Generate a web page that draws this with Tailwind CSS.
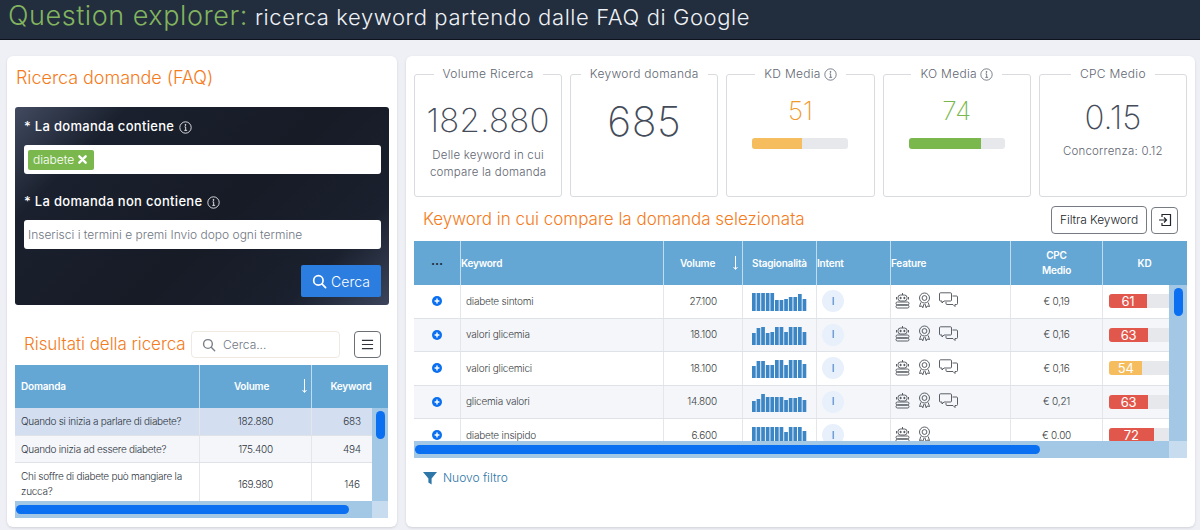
<!DOCTYPE html>
<html lang="it">
<head>
  <meta charset="UTF-8" />
  <meta name="viewport" content="width=device-width, initial-scale=1.0"/>
  <title>Question explorer</title>
  <script src="https://cdn.jsdelivr.net/npm/@tailwindcss/browser@4"></script>
</head>
<body class="h-[530px] w-[1200px] overflow-hidden bg-[#eef0f6] font-['Inter','Noto_Sans',sans-serif] text-[#3b4250]">

  <header class="flex h-[40px] items-baseline gap-[7px] border-b border-[#0e131b] bg-[#222d3d] pl-[8px]">
    <span class="text-[27px] leading-[31px] font-light tracking-[0.55px] text-[#82b45f]">Question explorer:</span>
    <span class="text-[22px] leading-[31px] font-light tracking-[0.6px] text-[#eef1f5]">ricerca keyword partendo dalle FAQ di Google</span>
  </header>

  <main class="flex gap-[9px] pl-[7px] pt-[16px]">

    <!-- colonna sinistra -->
    <section class="h-[471px] w-[390px] rounded-md bg-white px-[8px] shadow-sm">
      <h2 class="pl-[1px] pt-[10px] text-[18px] leading-[24px] font-light tracking-[-0.05px] text-[#f47b20]">Ricerca domande (FAQ)</h2>

      <div class="mt-[17px] h-[198px] w-[374px] rounded-[3px] bg-[linear-gradient(135deg,#414a60_0%,#1a202d_20%,#161b26_55%,#1a202d_82%,#3b445b_100%)] pl-[9px] pr-[8px] pt-[12px]">
        <label class="flex h-[16px] items-center gap-[5px] text-[13px] font-medium tracking-[0.3px] text-white">* La domanda contiene <svg class="h-[13px] w-[13px]" viewBox="0 0 16 16" fill="none" stroke="currentColor"><circle cx="8" cy="8" r="7"/><path d="M6.8 7.2H8.2V11.5M6.5 11.5H10" /><circle cx="8" cy="4.8" r=".6" fill="currentColor"/></svg></label>
        <div class="mt-[10px] flex h-[29px] items-center rounded-[3px] bg-white pl-[4px]">
          <span class="flex h-[20px] w-[66px] items-center gap-[4px] rounded-[2px] bg-[#7ab84e] pl-[5px] text-[12px] font-light text-white">diabete
            <svg class="h-[9px] w-[9px]" viewBox="0 0 10 10" stroke="white" stroke-width="2.6" stroke-linecap="round"><path d="M1.5 1.5 8.5 8.5M8.5 1.5 1.5 8.5"/></svg>
          </span>
        </div>
        <label class="mt-[20px] flex h-[16px] items-center gap-[5px] text-[13px] font-medium tracking-[0.3px] text-white">* La domanda non contiene <svg class="h-[13px] w-[13px]" viewBox="0 0 16 16" fill="none" stroke="currentColor"><circle cx="8" cy="8" r="7"/><path d="M6.8 7.2H8.2V11.5M6.5 11.5H10" /><circle cx="8" cy="4.8" r=".6" fill="currentColor"/></svg></label>
        <div class="mt-[10px] flex h-[29px] items-center rounded-[3px] bg-white pl-[4px] text-[12px] font-light text-[#6f7682]">Inserisci i termini e premi Invio dopo ogni termine</div>
        <div class="mt-[16px] flex justify-end">
          <button class="flex h-[32px] w-[80px] items-center justify-center gap-[4px] rounded-[2px] bg-[#2b7de0] text-[14px] font-light text-white">
            <svg class="h-[15px] w-[15px]" viewBox="0 0 16 16" fill="none" stroke="white" stroke-width="1.8" stroke-linecap="round"><circle cx="6.8" cy="6.8" r="5"/><path d="M10.6 10.6 14.5 14.5"/></svg>
            Cerca
          </button>
        </div>
      </div>

      <div class="mt-[26px] flex h-[27px] items-center">
        <h2 class="ml-[9px] w-[167px] shrink-0 text-[17px] font-light tracking-[-0.05px] text-[#f47b20]">Risultati della ricerca</h2>
        <div class="flex h-[27px] w-[149px] items-center gap-[7px] rounded-[4px] border border-[#efe9e2] pl-[10px] text-[12px] font-light text-[#6f7682]">
          <svg class="h-[14px] w-[14px]" viewBox="0 0 16 16" fill="none" stroke="#7b7f86" stroke-width="1.6" stroke-linecap="round"><circle cx="6.8" cy="6.8" r="5"/><path d="M10.6 10.6 14.5 14.5"/></svg>
          Cerca...
        </div>
        <button class="ml-[14px] flex h-[27px] w-[27px] items-center justify-center rounded-[4px] border border-[#6b6f76]">
          <svg class="h-[13px] w-[13px]" viewBox="0 0 14 14" stroke="#30343a" stroke-width="1.2"><path d="M1 2.5H13M1 7H13M1 11.5H13"/></svg>
        </button>
      </div>

      <div class="mt-[7px] w-[373px]">
        <div class="flex h-[43px] items-center bg-[#65a7d4] text-[10px] font-semibold tracking-[-0.2px] text-white">
          <div class="flex h-full w-[185px] items-center border-r border-white/60 pl-[6px]">Domanda</div>
          <div class="relative flex h-full w-[112px] items-center justify-center border-r border-white/60 pr-[8px]">Volume
            <svg class="absolute right-[3px] top-[14px] h-[14px] w-[7px]" viewBox="0 0 7 14" fill="none" stroke="white"><path d="M3.5 0V13M1.5 11 3.5 13.5 5.5 11"/></svg>
          </div>
          <div class="flex h-full flex-1 items-center justify-center pl-[2px]">Keyword</div>
        </div>
        <div class="flex h-[93px]">
          <div id="domande" class="w-[357px] overflow-hidden text-[10px] font-light tracking-[-0.27px] text-[#2f3540]"></div>
          <div class="w-[16px] bg-[#a3c8e6] pl-[4px] pt-[3px]"><div class="h-[28px] w-[9px] rounded-full bg-[#0a6ff0]"></div></div>
        </div>
        <div class="flex h-[17px]">
          <div class="w-[357px] bg-[#a3c8e6] pl-[1px] pt-[4px]"><div class="h-[9px] w-[333px] rounded-full bg-[#0a6ff0]"></div></div>
          <div class="w-[16px] bg-[#c7dcef]"></div>
        </div>
      </div>
    </section>

    <!-- colonna destra -->
    <section class="h-[471px] w-[789px] rounded-md bg-white px-[8px] shadow-sm">
      <div class="grid w-[773px] grid-cols-5 gap-[8px] pt-[9px]">
        <fieldset class="h-[132px] rounded-[3px] border border-[#d9dbdf] text-center">
          <legend class="mx-auto px-[9px] text-[12px] font-light tracking-[0.3px] text-[#5f6672]">Volume Ricerca</legend>
          <div class="mt-[15px] text-[33px] leading-[44px] font-extralight tracking-[0.3px] text-[#444c5a]">182.880</div>
          <div class="mt-[5px] text-[11.5px] leading-[17px] font-light tracking-[0.2px] text-[#5f6672]">Delle keyword in cui<br>compare la domanda</div>
        </fieldset>
        <fieldset class="h-[132px] rounded-[3px] border border-[#d9dbdf] text-center">
          <legend class="mx-auto px-[9px] text-[12px] font-light tracking-[0.3px] text-[#5f6672]">Keyword domanda</legend>
          <div class="mt-[12px] text-[41px] leading-[52px] font-extralight tracking-[0.5px] text-[#444c5a]">685</div>
        </fieldset>
        <fieldset class="h-[132px] rounded-[3px] border border-[#d9dbdf] text-center">
          <legend class="mx-auto flex items-center gap-[3px] px-[9px] text-[12px] font-light tracking-[0.3px] text-[#5f6672]">KD Media <svg class="h-[13px] w-[13px]" viewBox="0 0 16 16" fill="none" stroke="currentColor"><circle cx="8" cy="8" r="7"/><path d="M6.8 7.2H8.2V11.5M6.5 11.5H10" /><circle cx="8" cy="4.8" r=".6" fill="currentColor"/></svg></legend>
          <div class="mt-[13px] text-[26px] leading-[30px] font-extralight text-[#f09a2e]">51</div>
          <div class="mx-auto mt-[12px] h-[11px] w-[96px] overflow-hidden rounded-[3px] bg-[#e6e8eb]"><div class="h-full w-[50px] bg-[#f5bd5e]"></div></div>
        </fieldset>
        <fieldset class="h-[132px] rounded-[3px] border border-[#d9dbdf] text-center">
          <legend class="mx-auto flex items-center gap-[3px] px-[9px] text-[12px] font-light tracking-[0.3px] text-[#5f6672]">KO Media <svg class="h-[13px] w-[13px]" viewBox="0 0 16 16" fill="none" stroke="currentColor"><circle cx="8" cy="8" r="7"/><path d="M6.8 7.2H8.2V11.5M6.5 11.5H10" /><circle cx="8" cy="4.8" r=".6" fill="currentColor"/></svg></legend>
          <div class="mt-[13px] text-[26px] leading-[30px] font-extralight text-[#7ab84e]">74</div>
          <div class="mx-auto mt-[12px] h-[11px] w-[96px] overflow-hidden rounded-[3px] bg-[#e6e8eb]"><div class="h-full w-[72px] bg-[#7ab84e]"></div></div>
        </fieldset>
        <fieldset class="h-[132px] rounded-[3px] border border-[#d9dbdf] text-center">
          <legend class="mx-auto px-[9px] text-[12px] font-light tracking-[0.3px] text-[#5f6672]">CPC Medio</legend>
          <div class="mt-[15px] text-[33px] leading-[38px] font-extralight text-[#444c5a]">0.15</div>
          <div class="mt-[6px] text-[11.5px] leading-[18px] font-light tracking-[0.2px] text-[#5f6672]">Concorrenza: 0.12</div>
        </fieldset>
      </div>

      <div class="mt-[9px] flex h-[28px] items-center">
        <h2 class="ml-[9px] flex-1 text-[17px] font-light text-[#f47b20]">Keyword in cui compare la domanda selezionata</h2>
        <button class="flex h-[28px] w-[96px] items-center justify-center rounded-[4px] border border-[#777b82] text-[12px] font-light tracking-[-0.1px] text-[#22262c]">Filtra Keyword</button>
        <button class="ml-[4px] mr-[9px] flex h-[27px] w-[27px] items-center justify-center rounded-[4px] border border-[#777b82]">
          <svg class="h-[14px] w-[14px]" viewBox="0 0 14 14" fill="none" stroke="#22262c" stroke-width="1.2"><path d="M4 4V1.5H12.5V12.5H4V10M1 7H8.5M6 4.5 8.5 7 6 9.5"/></svg>
        </button>
      </div>

      <div class="mt-[7px] w-[773px]">
        <div class="flex h-[44px] items-center bg-[#65a7d4] text-[10px] font-semibold tracking-[-0.2px] text-white">
          <div class="flex h-full w-[47px] items-center justify-center border-r border-white/60 text-[13px] leading-none text-[#1f2b3a]">···</div>
          <div class="flex h-full w-[203px] items-center border-r border-white/60">Keyword</div>
          <div class="relative flex h-full w-[79px] items-center justify-center border-r border-white/60 pr-[11px]">Volume
            <svg class="absolute right-[3px] top-[15px] h-[14px] w-[7px]" viewBox="0 0 7 14" fill="none" stroke="white"><path d="M3.5 0V13M1.5 11 3.5 13.5 5.5 11"/></svg>
          </div>
          <div class="flex h-full w-[74px] items-center justify-center border-r border-white/60">Stagionalità</div>
          <div class="flex h-full w-[74px] items-center border-r border-white/60">Intent</div>
          <div class="flex h-full w-[120px] items-center border-r border-white/60">Feature</div>
          <div class="flex h-full w-[92px] items-center justify-center border-r border-white/60 text-center leading-[15px]">CPC<br>Medio</div>
          <div class="flex h-full flex-1 items-center justify-center pr-[1px]">KD</div>
        </div>
        <div class="flex h-[156px]">
          <div id="keyword" class="w-[755px] overflow-hidden text-[10px] font-light tracking-[-0.2px] text-[#3d3f44]"></div>
          <div class="w-[18px] bg-[#a3c8e6] pl-[5px] pt-[3px]"><div class="h-[28px] w-[9px] rounded-full bg-[#0a6ff0]"></div></div>
        </div>
        <div class="flex h-[17px]">
          <div class="w-[755px] bg-[#a3c8e6] pl-[1px] pt-[4px]"><div class="h-[9px] w-[625px] rounded-full bg-[#0a6ff0]"></div></div>
          <div class="w-[18px] bg-[#c7dcef]"></div>
        </div>
      </div>

      <div class="ml-[9px] mt-[11px] flex items-center gap-[6px] text-[12px] font-light text-[#2d76a8]">
        <svg class="h-[14px] w-[14px]" viewBox="0 0 14 14" fill="#2d76a8"><path d="M0 1H14L8.6 7.4V13.5L5.4 11.5V7.4Z"/></svg>
        Nuovo filtro
      </div>
    </section>
  </main>

  <script>
    const domande = [
      { text: 'Quando si inizia a parlare di diabete?', volume: '182.880', keyword: 683, rowClass: 'h-[28px] bg-[#d3dff0]' },
      { text: 'Quando inizia ad essere diabete?', volume: '175.400', keyword: 494, rowClass: 'h-[27px] bg-[#f4f6fa]' },
      { text: 'Chi soffre di diabete può mangiare la zucca?', volume: '169.980', keyword: 146, rowClass: 'h-[43px] bg-white' },
    ];

    const keywords = [
      { name: 'diabete sintomi', volume: '27.100', cpc: '€ 0,19', kd: 61, barClass: 'bg-[#e2574c]', bars: [18,18,18,18,18,11,11,12,14,14,17,12], chat: true, rowClass: 'bg-white' },
      { name: 'valori glicemia', volume: '18.100', cpc: '€ 0,16', kd: 63, barClass: 'bg-[#e2574c]', bars: [12,17,18,12,13,18,18,13,18,18,18,13], chat: true, rowClass: 'bg-[#f4f6fa]' },
      { name: 'valori glicemici', volume: '18.100', cpc: '€ 0,16', kd: 54, barClass: 'bg-[#f5bd5e]', bars: [12,17,17,13,13,18,18,13,18,18,18,14], chat: true, rowClass: 'bg-white' },
      { name: 'glicemia valori', volume: '14.800', cpc: '€ 0,21', kd: 63, barClass: 'bg-[#e2574c]', bars: [11,13,18,15,15,15,15,12,14,14,15,12], chat: true, rowClass: 'bg-[#f4f6fa]' },
      { name: 'diabete insipido', volume: '6.600', cpc: '€ 0.00', kd: 72, barClass: 'bg-[#e2574c]', bars: [18,18,18,18,18,18,18,13,18,18,18,14], chat: false, rowClass: 'bg-white' },
    ];

    const robotIcon = '<svg class="h-[17px] w-[15px]" viewBox="0 0 15 17" fill="none" stroke="#4a4f57" stroke-width=".9"><path d="M7.5 1V3"/><rect x="3" y="3" width="9" height="6" rx="2.5"/><path d="M1.5 5V7.5M13.5 5V7.5"/><circle cx="5.6" cy="6" r=".7" fill="#4a4f57"/><circle cx="9.4" cy="6" r=".7" fill="#4a4f57"/><rect x="1" y="10" width="13" height="2.8" rx="1.4"/><rect x="1" y="13.2" width="13" height="2.8" rx="1.4"/></svg>';
    const medalIcon = '<svg class="h-[17px] w-[13px]" viewBox="0 0 13 17" fill="none" stroke="#4a4f57" stroke-width=".9"><circle cx="6.5" cy="6" r="5"/><circle cx="6.5" cy="6" r="2.4"/><path d="M2.8 10.5 1.5 14.5 3.8 14 4.8 15.8 6 12M10.2 10.5 11.5 14.5 9.2 14 8.2 15.8 7 12"/></svg>';
    const chatIcon = '<svg class="h-[16px] w-[19px]" viewBox="0 0 19 16" fill="none" stroke="#4a4f57" stroke-width=".9"><path d="M1.5 .8H11.5Q12.5 .8 12.5 1.8V8Q12.5 9 11.5 9H5L3 11V9H1.5Q.5 9 .5 8V1.8Q.5 .8 1.5 .8Z"/><path d="M13.5 4H17.5Q18.5 4 18.5 5V11.5Q18.5 12.5 17.5 12.5H16V14.5L14 12.5H8Q7 12.5 7 11.5V10"/></svg>';

    function renderDomande() {
      const body = document.getElementById("domande");
      domande.forEach((row) => {
        const div = document.createElement("div");
        div.className = "flex border-b border-[#dfe2e7] " + row.rowClass;
        div.innerHTML = `
          <div class="flex w-[185px] shrink-0 items-center border-r border-[#e4e6ea] pl-[6px] pr-[2px] leading-[15px]">${row.text}</div>
          <div class="flex w-[112px] shrink-0 items-center justify-center border-r border-[#e4e6ea]">${row.volume}</div>
          <div class="flex flex-1 items-center justify-center pl-[20px]">${row.keyword}</div>`;
        body.appendChild(div);
      });
    }

    function renderKeywords() {
      const body = document.getElementById("keyword");
      keywords.forEach((row) => {
        const bars = row.bars.map((h, i) => `<rect x="${i * 4.6}" y="${18 - h}" width="3.7" height="${h}" />`).join("");
        const div = document.createElement("div");
        div.className = "flex h-[33.5px] border-b border-[#dfe2e7] " + row.rowClass;
        div.innerHTML = `
          <div class="flex w-[47px] shrink-0 items-center justify-center border-r border-[#e4e6ea]">
            <svg class="h-[10px] w-[10px]" viewBox="0 0 10 10"><circle cx="5" cy="5" r="5" fill="#0a6ff0"/><path d="M5 2.6V7.4M2.6 5H7.4" stroke="white" stroke-width="1.4"/></svg>
          </div>
          <div class="flex w-[203px] shrink-0 items-center border-r border-[#e4e6ea] pl-[5px]">${row.name}</div>
          <div class="flex w-[79px] shrink-0 items-center justify-end border-r border-[#e4e6ea] pr-[25px]">${row.volume}</div>
          <div class="flex w-[74px] shrink-0 items-center border-r border-[#e4e6ea] pl-[9px]"><svg class="mt-[2px] h-[18px] w-[55px]" viewBox="0 0 55 18" fill="#3d86c6">${bars}</svg></div>
          <div class="flex w-[74px] shrink-0 items-center border-r border-[#e4e6ea] pl-[5px]"><span class="flex h-[22px] w-[22px] items-center justify-center rounded-full bg-[#e8f0fb] text-[10px] font-normal text-[#2d76c6]">I</span></div>
          <div class="flex w-[120px] shrink-0 items-center gap-[8px] border-r border-[#e4e6ea] pb-[2px] pl-[4px]">${robotIcon}${medalIcon}${row.chat ? chatIcon : ""}</div>
          <div class="flex w-[92px] shrink-0 items-center justify-center border-r border-[#e4e6ea]">${row.cpc}</div>
          <div class="flex flex-1 items-center pl-[6px]"><div class="h-[14px] w-[60px] overflow-hidden rounded-l-[3px] bg-[#e6e8eb]"><div class="h-full text-center text-[13px] leading-[14px] font-normal text-white ${row.barClass}" style="width:${row.kd * 0.62}px">${row.kd}</div></div></div>`;
        body.appendChild(div);
      });
    }

    renderDomande();
    renderKeywords();
  </script>
</body>
</html>
